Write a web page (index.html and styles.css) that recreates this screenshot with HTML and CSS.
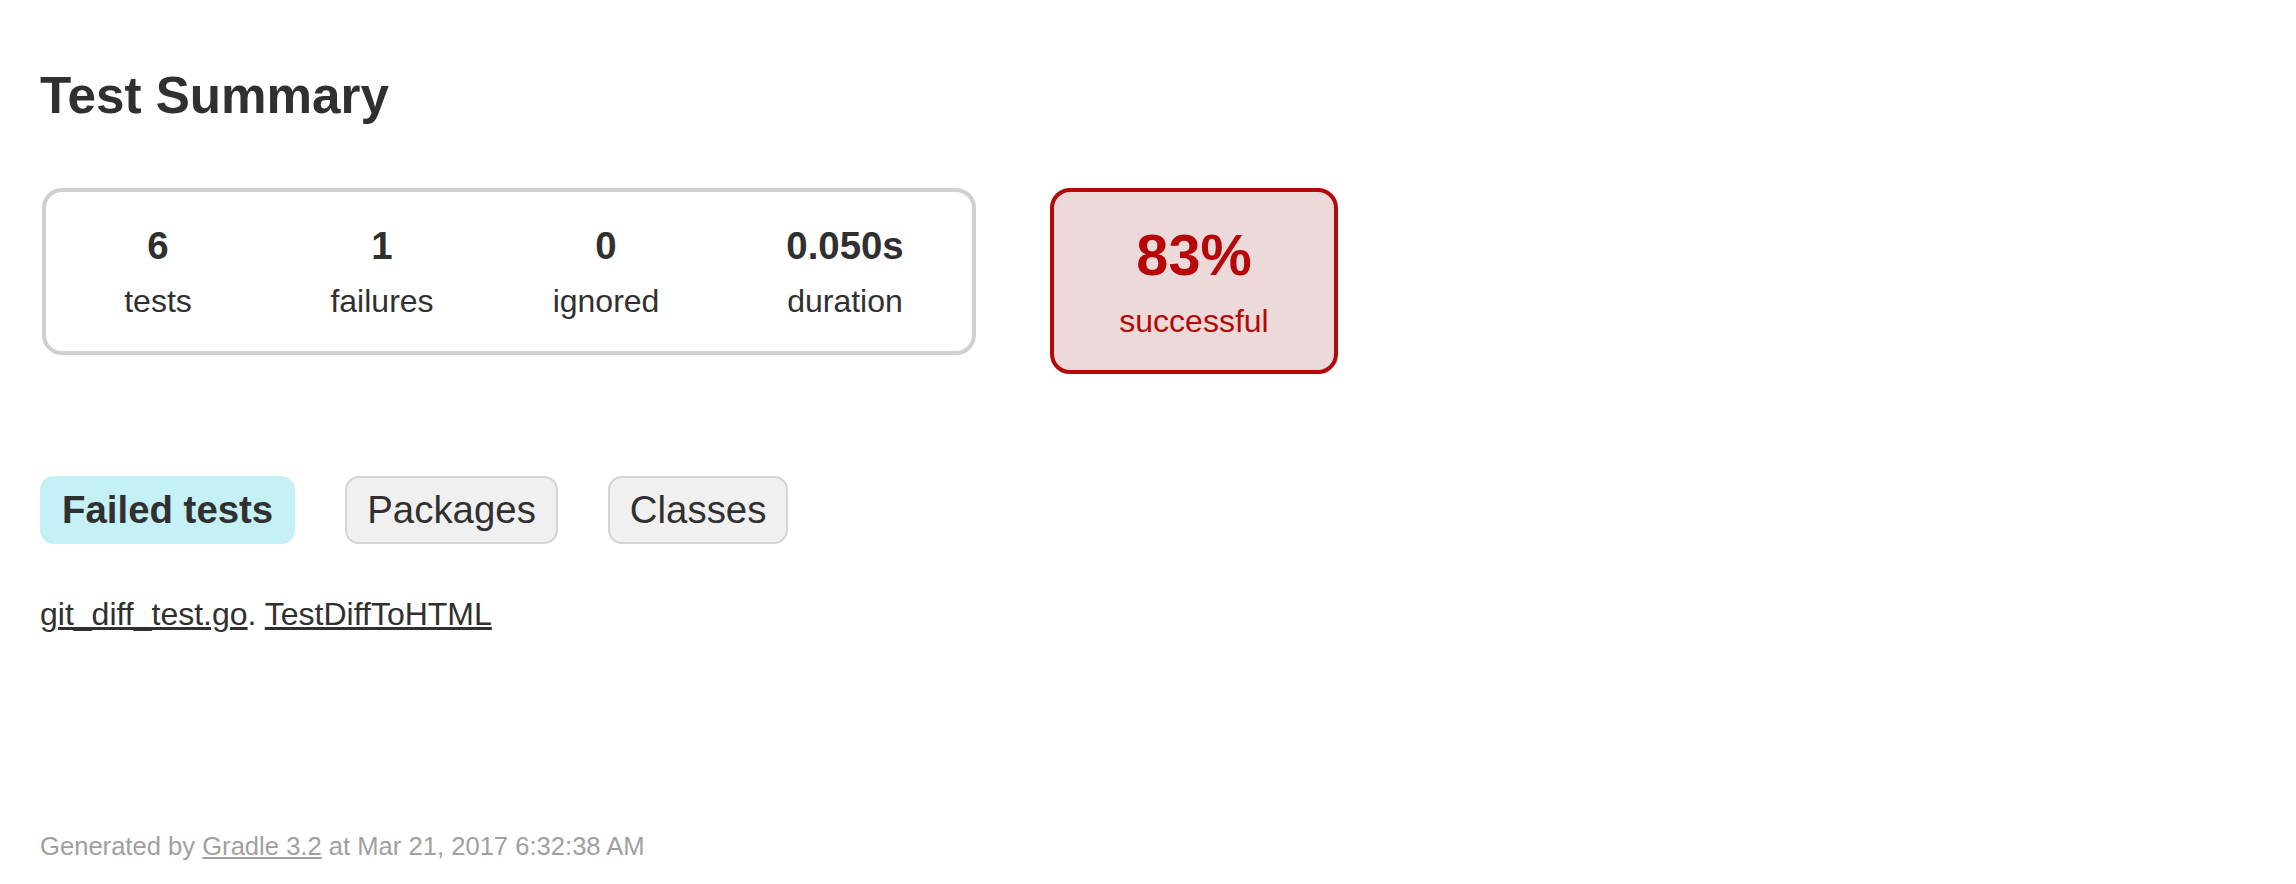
FILE: index.html
```html
<!DOCTYPE html>
<html>
<head>
<meta charset="utf-8">
<title>Test results - Test Summary</title>
<link rel="stylesheet" href="styles.css">
</head>
<body>
<div class="content">
  <h1 class="title">Test Summary</h1>
  <div class="summary">
    <div class="summary-group">
      <div class="info-box">
        <div class="counter">6</div>
        <p class="label">tests</p>
      </div>
      <div class="info-box">
        <div class="counter">1</div>
        <p class="label">failures</p>
      </div>
      <div class="info-box">
        <div class="counter">0</div>
        <p class="label">ignored</p>
      </div>
      <div class="info-box info-box-wide">
        <div class="counter">0.050s</div>
        <p class="label">duration</p>
      </div>
    </div>
    <div class="info-box success-rate">
      <div class="percent">83%</div>
      <p class="label">successful</p>
    </div>
  </div>
  <div class="tabs">
    <ul class="tab-links">
      <li class="tab-link selected"><a href="#tab0">Failed tests</a></li>
      <li class="tab-link"><a href="#tab1">Packages</a></li>
      <li class="tab-link"><a href="#tab2">Classes</a></li>
    </ul>
    <div class="tab">
      <ul class="link-list">
        <li class="link-item"><a href="#">git_diff_test.go</a>. <a href="#">TestDiffToHTML</a></li>
      </ul>
    </div>
  </div>
  <div class="footer">
    <p class="footer-text">Generated by <a href="#">Gradle 3.2</a> at Mar 21, 2017 6:32:38 AM</p>
  </div>
</div>
</body>
</html>
```

FILE: styles.css
```css
html, body {
  margin: 0;
  padding: 0;
  background: #ffffff;
}

body {
  font-family: "Liberation Sans", Arial, Helvetica, sans-serif;
  font-size: 32px;
  color: #303030;
}

a, a:visited {
  color: #303030;
}

.content {
  padding: 66px 40px 40px 40px;
}

.title {
  margin: 0;
  font-size: 51.2px;
  line-height: 59px;
  font-weight: bold;
  white-space: nowrap;
}

.summary {
  display: flex;
  align-items: flex-start;
  margin-top: 63px;
  margin-left: 2px;
}

.summary-group {
  display: flex;
  gap: 4px;
  padding: 2px;
  border: 4px solid #d0d0d0;
  border-radius: 20px;
}

.info-box {
  width: 220px;
  padding: 30px 0;
  text-align: center;
}

.summary-group .info-box {
  padding-bottom: 29px;
}

.info-box-wide {
  width: 250px;
}

.counter {
  font-size: 38.4px;
  line-height: 44px;
  font-weight: bold;
  margin-bottom: 15px;
}

.label {
  margin: 0;
  line-height: 37px;
}

.success-rate {
  width: 280px;
  margin-left: 74px;
  border: 4px solid #b60808;
  border-radius: 20px;
  background: #ecdada;
  color: #b60808;
}

.percent {
  font-size: 57.6px;
  line-height: 66px;
  font-weight: bold;
  margin-bottom: 15px;
}

.tabs {
  margin-top: 82px;
}

.tab-links {
  display: flex;
  gap: 50px;
  margin: 0;
  padding: 20px 0;
  list-style: none;
}

.tab-link {
  padding: 10px 20px;
  border: 2px solid #d4d4d4;
  border-radius: 14px;
  background: #f0f0f0;
}

.tab-link a {
  display: block;
  font-size: 38.4px;
  line-height: 44px;
  text-decoration: none;
}

.tab-link.selected {
  background: #c5f0f5;
  border-color: #c5f0f5;
}

.tab-link.selected a {
  font-weight: bold;
}

.link-list {
  margin: 32px 0 0 0;
  padding: 0;
  list-style: none;
}

.link-item {
  line-height: 37px;
  white-space: nowrap;
}

.footer {
  margin-top: 199px;
}

.footer-text {
  margin: 0;
  font-size: 25.6px;
  line-height: 29px;
  color: #a0a0a0;
  white-space: nowrap;
}

.footer-text a {
  color: #a0a0a0;
}
```
